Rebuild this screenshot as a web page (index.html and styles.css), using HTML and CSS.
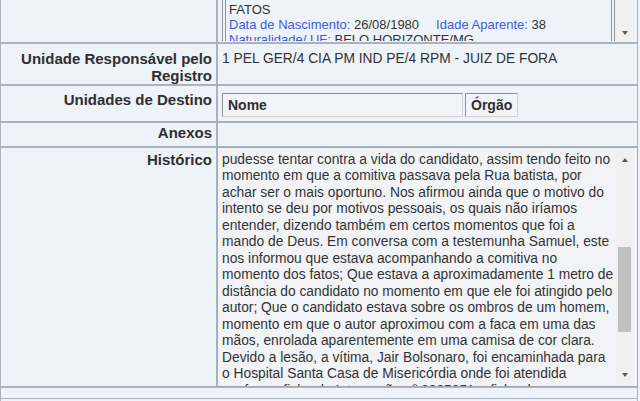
FILE: index.html
```html
<!DOCTYPE html>
<html lang="pt-BR">
<head>
<meta charset="utf-8">
<title>Registro</title>
<link rel="stylesheet" href="styles.css">
</head>
<body>
<div class="form">
  <div class="cell lbl lbl-top"></div>
  <div class="cell val val-top">
    <div class="scroller">
      <div class="scroller-view">
        <div class="rec">
          <div class="rec-in">
            <div class="rec-line">FATOS</div>
            <div class="rec-line"><span class="k">Data de Nascimento:</span> 26/08/1980<span class="k k-gap">Idade Aparente:</span> 38</div>
            <div class="rec-line"><span class="k">Naturalidade/ UF:</span> BELO HORIZONTE/MG</div>
          </div>
        </div>
      </div>
      <div class="vbar">
        <div class="vbar-track"></div>
        <div class="vbar-btn"><span class="tri tri-down"></span></div>
      </div>
    </div>
  </div>

  <div class="cell lbl lbl-r2">Unidade Responsável pelo<br>Registro</div>
  <div class="cell val val-r2">1 PEL GER/4 CIA PM IND PE/4 RPM - JUIZ DE FORA</div>

  <div class="cell lbl lbl-r3">Unidades de Destino</div>
  <div class="cell val val-r3">
    <div class="dest">
      <div class="dest-h dest-nome">Nome</div>
      <div class="dest-h dest-orgao">Órgão</div>
    </div>
  </div>

  <div class="cell lbl lbl-r4">Anexos</div>
  <div class="cell val val-r4"></div>

  <div class="cell lbl lbl-r5">Histórico</div>
  <div class="cell ta">
    <div class="ta-text">pudesse tentar contra a vida do candidato, assim tendo feito no<br>momento em que a comitiva passava pela Rua batista, por<br>achar ser o mais oportuno. Nos afirmou ainda que o motivo do<br>intento se deu por motivos pessoais, os quais não iríamos<br>entender, dizendo também em certos momentos que foi a<br>mando de Deus. Em conversa com a testemunha Samuel, este<br>nos informou que estava acompanhando a comitiva no<br>momento dos fatos; Que estava a aproximadamente 1 metro de<br>distância do candidato no momento em que ele foi atingido pelo<br>autor; Que o candidato estava sobre os ombros de um homem,<br>momento em que o autor aproximou com a faca em uma das<br>mãos, enrolada aparentemente em uma camisa de cor clara.<br>Devido a lesão, a vítima, Jair Bolsonaro, foi encaminhada para<br>o Hospital Santa Casa de Misericórdia onde foi atendida<br>conforme ficha de Internação nº 2385351 e ficha de</div>
    <div class="ta-bar">
      <div class="vbar-btn"><span class="tri tri-up"></span></div>
      <div class="ta-track"><div class="ta-thumb"></div></div>
      <div class="vbar-btn"><span class="tri tri-down"></span></div>
    </div>
  </div>

  <div class="cell foot"><div class="foot-line"></div></div>
</div>
</body>
</html>
```

FILE: styles.css
```css
* { box-sizing: border-box; }
html, body { margin: 0; padding: 0; }
body {
  background: #eef2f9;
  font-family: "Liberation Sans", Arial, sans-serif;
  color: #333;
  overflow: hidden;
}

.form {
  display: grid;
  grid-template-columns: 217px 421px;
  grid-template-rows: 73px 42px 37px 25px 240px 30px;
  margin-top: -30px;
}

.cell {
  border: 1px solid #a9b2bf;
  background: #eef2f9;
}

.lbl {
  text-align: right;
  font-weight: bold;
  font-size: 15px;
  line-height: 17px;
  padding: 0 4px 0 0;
  color: #2f2f2f;
}

.val {
  font-size: 13.8px;
  line-height: 17px;
  padding: 0 4px;
  color: #333;
}

.lbl-r2, .val-r2 { padding-top: 5.5px; }
.lbl-r3 { padding-top: 5px; }
.val-r3 { padding-top: 7px; }
.lbl-r4 { padding-top: 1px; }
.lbl-r5 { padding-top: 2.5px; }

/* top scrolling record box */
.val-top { padding: 0 0 1px 0; }
.scroller {
  display: flex;
  height: 70px;
  padding-right: 4px;
}
.scroller-view {
  flex: 1;
  min-width: 0;
  overflow: hidden;
  padding: 0 1px 0 4px;
}
.rec {
  border: 1px solid #8f959d;
  border-bottom: none;
  padding: 0 2px;
  height: 100px;
}
.rec-in {
  border: 1px solid #8f959d;
  border-bottom: none;
  height: 100%;
  padding: 28.5px 3px 0;
  font-size: 13px;
  line-height: 15px;
  color: #333;
  white-space: nowrap;
}
.k { color: #3f5bd5; }
.k-gap { margin-left: 17px; }

.vbar {
  width: 17px;
  display: flex;
  flex-direction: column;
  background: #f0f0f0;
}
.vbar-track { flex: 1; }
.vbar-btn {
  height: 17px;
  display: flex;
  align-items: center;
  justify-content: center;
  background: #f0f0f0;
}
.tri {
  width: 0;
  height: 0;
  border-left: 3.5px solid transparent;
  border-right: 3.5px solid transparent;
}
.tri-down { border-top: 4px solid #5a5a5a; }
.tri-up { border-bottom: 4px solid #5a5a5a; }

/* destination units */
.dest {
  display: flex;
  gap: 2px;
}
.dest-h {
  height: 24px;
  border: 1px solid;
  border-color: #8d9299 #d0d4da #d0d4da #8d9299;
  background: #f2f4f8;
  padding: 0 5px;
  font-weight: bold;
  font-size: 14px;
  line-height: 22px;
  color: #2f2f2f;
}
.dest-nome { width: 241px; }

/* historico textarea */
.ta {
  display: flex;
  padding: 0 4px;
  background: #f1f3f6;
  border-color: #a3aab5;
}
.ta-text {
  flex: 1;
  min-width: 0;
  overflow: hidden;
  white-space: nowrap;
  font-size: 13.8px;
  line-height: 16.5px;
  padding-top: 3.7px;
  color: #333;
}
.ta-bar {
  width: 17px;
  margin: 3px 0;
  display: flex;
  flex-direction: column;
  background: #f0f0f0;
}
.ta-track { flex: 1; }
.ta-thumb {
  margin: 79px 2px 0;
  height: 85px;
  background: #c1c1c1;
}

.foot {
  grid-column: 1 / span 2;
  padding-top: 10px;
}
.foot-line { border-top: 1px solid #a9b2bf; }
```
